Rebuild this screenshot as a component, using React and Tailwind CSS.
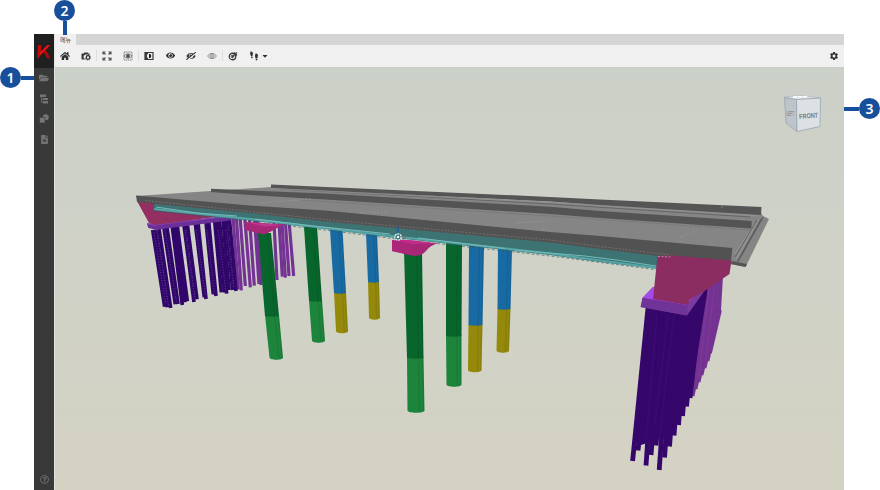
import React from 'react';
import { FaHome, FaEye, FaEyeSlash, FaCaretDown, FaFolderOpen, FaFileAlt, FaRegQuestionCircle } from 'react-icons/fa';
import { MdSettings } from 'react-icons/md';

const CameraGear = () => (
  <svg width="10" height="10" viewBox="0 0 20 20">
    <path fill="#3a3a3a" fillRule="evenodd" d="M2 5h3l2-2h6l2 2h2v4h-2V7H9Q5 8 5 12t4 4v1H2L1 16V6z" />
    <circle cx="14" cy="13" r="3.600" fill="#e4e4e4" stroke="#303030" strokeWidth="2.400" />
    <circle cx="14" cy="13" r="5.300" fill="none" stroke="#303030" strokeWidth="1.200" strokeDasharray="2.200 1.900" />
    <circle cx="8" cy="11" r="1.600" fill="#f0f0f0" />
  </svg>
);

const Expand = () => (
  <svg width="10" height="10" viewBox="0 0 20 20" fill="none" stroke="#505050" strokeWidth="2.200">
    <path d="M2 7V2h5M2 2l5 5M13 2h5v5M18 2l-5 5M2 13v5h5M2 18l5-5M18 13v5h-5M18 18l-5-5" />
  </svg>
);

const FocusEye = () => (
  <svg width="10" height="10" viewBox="0 0 20 20" fill="none" stroke="#777">
    <path d="M2 2h16v16H2z" strokeWidth="1.800" strokeDasharray="3 1.200" />
    <path d="M2 10q8-9 16 0q-8 9-16 0z" strokeWidth="2" />
    <circle cx="10" cy="10" r="3" fill="#444" stroke="#444" />
  </svg>
);

const Section = () => (
  <svg width="10" height="10" viewBox="0 0 20 20">
    <path d="M2 3h16v14H2z" fill="#eee" stroke="#3a3a3a" strokeWidth="2.400" />
    <path d="M2 3h6v14H2z" fill="#3a3a3a" />
    <path d="M10 5.500a4.500 4.500 0 0 1 0 9z" fill="#222" />
    <path d="M10 5.500a4.500 4.500 0 0 0 0 9z" fill="#eee" />
  </svg>
);

const OutlineEye = () => (
  <svg width="10" height="10" viewBox="0 0 20 20" fill="none" stroke="#888" strokeWidth="1.800">
    <path d="M1 10Q10-1 19 10Q10 21 1 10z" />
    <circle cx="10" cy="10" r="4" />
    <circle cx="10" cy="10" r="1" fill="#888" />
  </svg>
);

const Measure = () => (
  <svg width="10" height="10" viewBox="0 0 20 20" fill="none" stroke="#3c3c3c">
    <circle cx="9" cy="11" r="6.500" strokeWidth="2.600" />
    <circle cx="9" cy="11" r="2.500" strokeWidth="2" />
    <path d="M8 12L18 3M12 3l6 6" strokeWidth="2.200" />
    <path d="M5 8l4 7" stroke="#888" strokeWidth="1.200" />
  </svg>
);

const Footsteps = () => (
  <svg width="10" height="10" viewBox="0 0 20 20" fill="#333">
    <path d="M3 1q4-1 5 3l-1 6H4Q1 5 3 1zM4 11h3q1 4-1 4t-2-4z" />
    <path d="M13 5q4-1 5 3l-1 6h-4q-2-5 0-9zM13 15h4q0 4-2 4t-2-4z" />
  </svg>
);

const Tree = () => (
  <svg width="10" height="10" viewBox="0 0 20 20" fill="#737373">
    <path d="M2 1h12v5H2zM8 8h10v4H8zM8 14h10v5H8zM4 6h1.500v9.500H8V17H4zM5 9.500h3V11H5z" />
  </svg>
);

const Shapes = () => (
  <svg width="10" height="10" viewBox="0 0 20 20">
    <circle cx="13.500" cy="6.500" r="6" fill="#737373" />
    <path d="M1 7h11v11H1z" fill="#777" stroke="#393939" strokeWidth="1.300" />
  </svg>
);

const Logo = () => (
  <svg width="14" height="15" viewBox="0 0 42 45">
    <path d="M3 4h10L11 29 5 42H1z" fill="#c90a0a" />
    <path d="M10 24L31 3h9L8 36z" fill="#f01212" />
    <path d="M18 20l8-3 14 26h-9z" fill="#b50909" />
  </svg>
);

const Divider = () => <span className="block h-[11px] w-px bg-[#dddddd]" />;

// top x, bottom x, bottom y
const nearPiles = [
  [83, 119, 380], [92, 127, 382], [102, 137, 384], [117, 151, 373], [126, 159, 372],
  [142, 172, 375], [150, 180, 367], [157, 187, 364], [177, 207, 366], [187, 216, 358],
  [211, 238, 352], [219, 243, 357], [243, 265, 343], [251, 273, 348], [269, 289, 337],
  [277, 299, 337], [283, 305, 341], [294, 312, 330], [303, 323, 330], [313, 333, 333],
];
const farPiles = [
  [324, 340, 328], [334, 349, 331], [345, 361, 318], [359, 376, 322], [373, 388, 317],
  [388, 402, 312], [397, 408, 315], [446, 456, 300], [461, 472, 290], [470, 481, 293],
  [480, 492, 288], [491, 506, 288],
];
const frontRightPiles = [
  [648, 632.6, 461], [653, 638, 450.500], [657, 646, 465.500], [663, 651, 455], [667, 656, 445.500],
  [671, 659.200, 470], [676, 664.500, 457.500], [680, 669.500, 446.500], [684, 674, 435.500],
  [688, 678.500, 425], [692, 682.500, 416], [696, 686.500, 406.500], [700, 690, 398],
];
const rearRightPiles = [
  [711, 692.500, 396], [713, 695.500, 389], [715, 698.500, 382], [716, 701.500, 375],
  [717, 704.500, 368], [718, 707.500, 361], [720, 710, 353],
];

// left x, right x and y at the top, the colour change and the foot
const columns = [
  { t: [258, 271, 233], m: [265, 279, 316], b: [269.500, 283, 357.500], c: ['#08662d', '#1d843c'] },
  { t: [304, 317, 227], m: [309, 322, 301], b: [312, 325, 340.500], c: ['#08662d', '#1d843c'] },
  { t: [330, 342.500, 229], m: [334, 346, 293], b: [336, 348, 331], c: ['#186aa3', '#94890b'] },
  { t: [366, 377, 233], m: [368, 379, 282], b: [369, 380, 317.500], c: ['#186aa3', '#94890b'] },
  { t: [404, 422, 250], m: [407, 423.500, 358], b: [407.500, 424.500, 410.500], c: ['#08662d', '#1d843c'] },
  { t: [446, 462, 242], m: [446, 461.500, 336], b: [446.500, 461.500, 384.500], c: ['#08662d', '#1d843c'] },
  { t: [469, 484, 245], m: [468.500, 482.500, 325], b: [468, 481.500, 370], c: ['#186aa3', '#94890b'] },
  { t: [498, 512, 248], m: [497.500, 510.500, 309], b: [496.500, 509, 350.500], c: ['#186aa3', '#94890b'] },
];

function Column({ t, m, b, c }) {
  const shade = (f) => `M${t[0] + (t[1] - t[0]) * f} ${t[2]}L${m[0] + (m[1] - m[0]) * f} ${m[2]}L${b[0] + (b[1] - b[0]) * f} ${b[2] + 1}`;
  return (
    <g>
      <path fill={c[1]} d={`M${m[0]} ${m[2] - 1}L${m[1]} ${m[2] - 1}L${b[1]} ${b[2]}C${b[1]} ${b[2] + 3} ${b[0]} ${b[2] + 3} ${b[0]} ${b[2]}Z`} />
      <path fill={c[0]} d={`M${t[0]} ${t[2]}L${t[1]} ${t[2]}L${m[1]} ${m[2]}Q${(m[0] + m[1]) / 2} ${m[2] + 1.5} ${m[0]} ${m[2]}Z`} />
      <path stroke="#000" strokeOpacity=".07" strokeWidth="1.500" fill="none" d={shade(0.7)} />
      <path stroke="#000" strokeOpacity=".07" strokeWidth="1.500" fill="none" d={shade(0.94)} />
    </g>
  );
}

function Bridge() {
  return (
    <svg className="block h-full w-full" viewBox="55 67 789 423" preserveAspectRatio="none">
      <g transform="translate(125 180) scale(.33333)" strokeWidth="9.500">
        {farPiles.map(([t, b, y]) => <path key={t} d={`M${t} 110L${b} ${y}`} stroke="#743394" />)}
        {nearPiles.map(([t, b, y]) => <path key={t} d={`M${t} ${150 - (t - 80) * 0.15}L${b} ${y}`} stroke="#30066b" strokeWidth="11" />)}
        {[0, 1, 3, 8, 10, 12, 15, 18].map((i) => {
          const [t, b, y] = nearPiles[i];
          return <path key={i} d={`M${t + 3} 150L${b + 3} ${y - 8}`} stroke="#8061a3" strokeWidth="1.800" strokeDasharray="3 5" />;
        })}
        <path d="M66 131L70 144 95 149 320 121 312 110 90 130z" fill="#6b2f98" />
        <path d="M66 131L85 135 300 110" stroke="#8440b5" strokeWidth="4" fill="none" />
      </g>
      {columns.map((c) => <Column key={c.t[0]} {...c} />)}

      <path d="M137 201L154 203 155 210.500 222 216 155 225 149 223z" fill="#942f61" />
      <path d="M154 203L250 211 250 215 220 217 154 211z" fill="#942f61" />

      <path d="M136 196L211 191 271 187 761 213 763 216 769 219 745.600 267 730 264 731 255z" fill="#858585" />
      <path d="M766 219.500L743.500 263 M731 264L745.600 267 747 264 732 261z" fill="#555" />
      <path d="M763 217L737 263" stroke="#606060" strokeWidth="1.500" />
      <path d="M759 219L736 259M755 223L735 254" stroke="#a0a0a0" strokeWidth=".7" />
      <path d="M761 219L738 261M757 220L735 257" stroke="#555" strokeWidth=".7" />
      <path d="M271 184.500L550 197 600 199.500 761.500 207 761 215 600 205 550 201.500 271 188z" fill="#555" />
      <path d="M280 189L400 195.500 550 204 750 217" stroke="#666" strokeWidth="1" fill="none" />
      <path d="M271 188.500L550 202.500 761 216" stroke="#9a9a9a" strokeWidth=".6" fill="none" />
      <path d="M211 188.800L250 190.500 325 193.500 400 198 550 206.800 600 211 751.700 221 751.300 228.500 600 218 550 214 325 199.500 250 195 211 192z" fill="#545454" />
      <path d="M300 200L550 216 750 230" stroke="#6f6f6f" strokeWidth=".7" strokeDasharray="2 1" fill="none" />
      <path d="M260 203L310 199M360 213L386 212M515 223L545 221M680 237L697 230" stroke="#a3a3a3" strokeWidth=".6" strokeDasharray="1.500 2" />

      <path d="M154 203.500L250 212.500 325 221 400 228 550 241.500 600 248.500 658 255 658 269 600 262 550 255 400 238.500 325 229 250 220.500 154 210.500z" fill="#3e7373" />
      <path d="M154 209L250 219 325 228 400 237 550 253.500 600 260.500 658 268" fill="none" stroke="#54a5a5" strokeWidth="2" />
      <path d="M156 207L197 213 237 216M255 219L314 226 390 234M418 238L505 248.500M515 250L585 256Q620 260 656 266" fill="none" stroke="#75bbbb" strokeWidth="1" />
      <path d="M154 211L325 230 400 239.500 550 256 658 270" fill="none" stroke="#265d60" strokeWidth=".6" strokeDasharray="3 2" />

      <path d="M136 195.500L250 205.500 325 210.600 550 232 600 236 732.300 248 731 261 658 256 600 249 550 242.500 325 221.500 250 213 137 202z" fill="#525252" />
      <path d="M145 200.500L250 211.500 325 219.500 550 240 600 246.500 670 255" fill="none" stroke="#7b7b7b" strokeWidth=".7" strokeDasharray="2 1.500" />
      <path d="M543 227v4M722 205v3" stroke="#999" strokeWidth=".6" />

      <path d="M244.500 222L285 224.500Q278 227 270 232L264 234.500 245 230z" fill="#a62876" />
      <path d="M245 222L284 225 265 226.500z" fill="#c03791" />
      <path d="M392 240L438 243.500Q430 245 426 251Q422 256 414 256L392 251z" fill="#a52775" />
      <path d="M392 240L410 240 438 243.500 412 244z" fill="#c42a8e" />
      <path d="M392 241L411 243.500 410 255 392 251z" fill="#ac267a" />

      <path d="M697 287L723 276 721 310 710 352 691 396z" fill="#743391" />
      {rearRightPiles.map(([t, b, y]) => <path key={b} d={`M${t} 310L${b} ${y}`} stroke="#743391" strokeWidth="3.800" />)}
      <path d="M715 281l-9 79M709 286l-10 90" stroke="#843ba3" strokeWidth=".7" fill="none" />
      <path d="M646.500 306L688 310 708 282 707 294 691 395 672 430 656 440 641 445 634 440z" fill="#35076b" />
      {frontRightPiles.map(([t, b, y]) => <path key={b} d={`M${t} 308L${b} ${y}`} stroke="#35076b" strokeWidth="4.800" />)}
      <path d="M657 315L646 440M674 314L659 442M668 315L655 423" stroke="#47127e" strokeWidth=".5" />
      <path d="M653 287L642.500 298 641 307 687 315.500 708 286 704 281z" fill="#6d3195" />
      <path d="M653 287L642.500 298 687 305 705 285z" fill="#a44aea" />
      <path d="M642.500 298L688 305.500 686.500 315.500 640.500 307z" fill="#703397" />
      <path d="M688 302L707 287 687 315z" fill="#793b9d" />
      <path d="M657.500 256L672 255.500 731.500 260.500 729.500 274 706 290 689 300 688 305 653 299z" fill="#8b2d60" />
      <path d="M658 256.500L671 257" stroke="#b9a5af" strokeWidth=".8" strokeDasharray="2 1.500" />

      <path d="M398 226v9" stroke="#175bad" strokeWidth="1.300" />
      <path d="M398 237h8" stroke="#aa4f58" strokeWidth="1" />
      <circle cx="398" cy="237" r="3.200" fill="#3b7676" stroke="#e7ffff" strokeWidth="1.300" strokeDasharray="2 .8" />
      <circle cx="398" cy="237" r="1.200" fill="#fff" />

      <path d="M784.500 97L801 95.500 820.500 98 796.500 99.500z" fill="#e2e7e9" stroke="#b0b7bf" strokeWidth=".7" />
      <path d="M784.500 97.500L796.500 99.500 797 131.500 786 123z" fill="#bdc4ca" stroke="#9aa4b0" strokeWidth=".8" />
      <path d="M796.500 99.500L820.500 98 820 126.500 797 131.500z" fill="#dce1e4" stroke="#9aa4b0" strokeWidth=".8" />
      <path d="M793 97l15-.5" stroke="#fff" strokeWidth="1.500" strokeDasharray="4 1" />
      <text transform="translate(799.300 119) rotate(-5)" fontFamily="Liberation Sans, sans-serif" fontSize="7" fontWeight="700" fill="#737b82" textLength="19" lengthAdjust="spacingAndGlyphs">FRONT</text>
      <text transform="matrix(1 .08 0 1 786.500 115.500)" fontFamily="Liberation Sans, sans-serif" fontSize="7" fontWeight="700" fill="#858d94" textLength="7.500" lengthAdjust="spacingAndGlyphs">LEFT</text>
    </svg>
  );
}

const Badge = ({ children }) => (
  <span className="flex h-[21px] w-[21px] shrink-0 items-center justify-center rounded-full bg-[#184f9b] font-['Noto_Sans',sans-serif] text-[14px] leading-none font-semibold text-white">
    {children}
  </span>
);

export default function App() {
  return (
    <div className="relative h-[490px] w-[880px] overflow-hidden bg-white pt-[34px] pl-[34px] font-['Liberation_Sans','Noto_Sans_CJK_KR',sans-serif] antialiased">
      <div className="flex h-[456px] w-[810px]">
        <aside className="flex w-5 shrink-0 flex-col items-center bg-[#393939] text-[#737373]">
          <div className="flex h-[34px] w-full items-center justify-center bg-[#202020]"><Logo /></div>
          <nav className="flex flex-1 flex-col items-center gap-[10.500px] pt-[5px]">
            <FaFolderOpen size={10} />
            <Tree />
            <Shapes />
            <FaFileAlt size={9} />
          </nav>
          <FaRegQuestionCircle size={9} className="mb-[6px]" />
        </aside>
        <main className="flex min-w-0 flex-1 flex-col border-l border-[#e4e4df]">
          <div className="flex h-[11px] shrink-0 bg-[#d5d5d5]">
            <div className="flex w-[21px] items-center justify-center bg-[#f0f0f0] text-[6px] leading-none text-[#444]">메뉴</div>
          </div>
          <div className="flex h-[22px] shrink-0 items-center bg-[#f0f0f0] pr-[5px] pb-px pl-[5px] text-[#303030]">
            <FaHome size={10} />
            <span className="ml-[11px]"><CameraGear /></span>
            <span className="ml-[5px]"><Divider /></span>
            <span className="ml-[5px]"><Expand /></span>
            <span className="ml-[11px]"><FocusEye /></span>
            <span className="ml-[5px]"><Divider /></span>
            <span className="ml-[5px]"><Section /></span>
            <FaEye size={9} className="ml-[12px]" />
            <FaEyeSlash size={10} className="ml-[11px] -scale-x-100" />
            <span className="ml-[11px]"><OutlineEye /></span>
            <span className="ml-[5px]"><Divider /></span>
            <span className="ml-[5px]"><Measure /></span>
            <span className="ml-[11px]"><Footsteps /></span>
            <FaCaretDown size={8} className="ml-[2px]" />
            <MdSettings size={10} className="ml-auto" />
          </div>
          <div className="min-h-0 flex-1 bg-linear-to-b from-[#cbd0c8] via-[#d0d2c7] to-[#d4d2c3]">
            <Bridge />
          </div>
        </main>
      </div>
      <div className="absolute top-[67px] left-0 flex items-center">
        <Badge>1</Badge><span className="h-[4px] w-[13px] bg-[#184f9b]" />
      </div>
      <div className="absolute top-0 left-[54px] flex flex-col items-center">
        <Badge>2</Badge><span className="h-[14px] w-[4px] bg-[#184f9b]" />
      </div>
      <div className="absolute top-[98px] right-0 flex items-center">
        <span className="h-[4px] w-[15px] bg-[#184f9b]" /><Badge>3</Badge>
      </div>
    </div>
  );
}
